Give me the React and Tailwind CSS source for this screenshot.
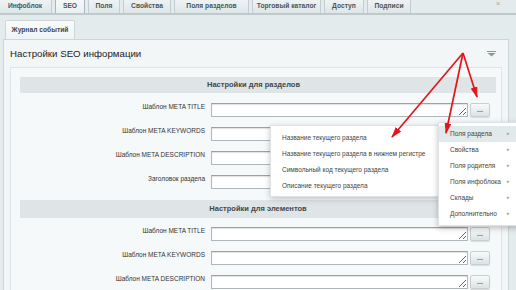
import React from "react";

const tabs = [
  { name: "Инфоблок", w: "w-[54px]" },
  { name: "SEO", w: "w-[30px]", active: true },
  { name: "Поля", w: "w-[32px]" },
  { name: "Свойства", w: "w-[48px]" },
  { name: "Поля разделов", w: "w-[75px]" },
  { name: "Торговый каталог", w: "w-[69px]" },
  { name: "Доступ", w: "w-[40px]" },
  { name: "Подписи", w: "w-[44px]" },
];

const sectionRows = [
  "Шаблон META TITLE",
  "Шаблон META KEYWORDS",
  "Шаблон META DESCRIPTION",
  "Заголовок раздела",
];

const elementRows = [
  "Шаблон META TITLE",
  "Шаблон META KEYWORDS",
  "Шаблон META DESCRIPTION",
];

const leftMenu = [
  "Название текущего раздела",
  "Название текущего раздела в нижнем регистре",
  "Символьный код текущего раздела",
  "Описание текущего раздела",
];

const rightMenu = [
  "Поля раздела",
  "Свойства",
  "Поля родителя",
  "Поля инфоблока",
  "Склады",
  "Дополнительно",
];

function Row({ label, hideBtn }) {
  return (
    <div className="flex items-start h-[14px]">
      <div className="w-[185px] text-right text-[6.5px] leading-[8px] text-[#333]">
        {label}
      </div>
      <textarea
        readOnly
        className="ml-[6px] w-[257px] h-[14px] p-0 bg-white border border-[#aeb8bc] border-t-[#98a3a7] shadow-[inset_0_1px_1px_rgba(0,0,0,0.12)] outline-none text-[6px] overflow-hidden"
      />
      <button className="ml-[2px] w-[20px] h-[14px] rounded-[2px] border border-[#c6cfd2] bg-gradient-to-b from-[#f8fafa] to-[#dce3e5] text-[7px] font-bold leading-[8px] text-[#5a6266] shadow-[0_1px_1px_rgba(0,0,0,0.12)]">
        {hideBtn ? "" : "..."}
      </button>
    </div>
  );
}

export default function App() {
  return (
    <div className="relative w-[516px] h-[290px] overflow-hidden bg-[#e4ebed] font-['Liberation_Sans',Arial,sans-serif]">
      {/* top tabs */}
      <div className="relative flex gap-[3px] h-[13px] -ml-[2px]">
        {tabs.map((t) => (
          <div
            key={t.name}
            className={`${t.w} h-[13px] flex items-center justify-center border-x text-[6.7px] font-bold text-[#4b5558] ${
              t.active
                ? "bg-gradient-to-b from-[#f6f8f8] to-[#eaf0f1] border-[#aab5b9]"
                : "bg-gradient-to-b from-[#eef2f3] to-[#dfe6e8] border-[#c3ccd0]"
            }`}
          >
            {t.name}
          </div>
        ))}
        <div className="absolute left-[498px] top-0 text-[7px] leading-[8px] text-[#9aa5a9]">
          ×
        </div>
      </div>
      <div className="h-[2px] bg-[#bfc9cc]" />

      {/* sub tab */}
      <div className="pl-[5px] pt-[5px]">
        <div className="w-[70px] h-[19px] flex items-center justify-center rounded-t-[2px] border border-b-0 border-[#cdd5d8] bg-gradient-to-b from-[#fafcfc] to-[#eef3f4] text-[6.7px] font-bold text-[#3f484b]">
          Журнал событий
        </div>
      </div>

      {/* main panel */}
      <div className="ml-[3px] w-[506px] h-[260px] bg-[#f2f6f6] border border-[#cdd5d8]">
        <div className="flex items-center justify-between h-[27px] pl-[6px] pr-[12px] pt-[1px]">
          <div className="text-[9.7px] text-[#222]">Настройки SEO информации</div>
          <svg width="9" height="6" viewBox="0 0 9 6">
            <rect x="0" y="0" width="9" height="1" fill="#8a979b" />
            <path d="M0.5 2 L8.5 2 L4.5 5.5 Z" fill="#8a979b" />
          </svg>
        </div>
        <div className="ml-[6px] w-[492px] h-[240px] bg-[#f6f9fa] border border-[#dfe6e8] pt-[9px] pl-[9px] pr-[5px]">
          <div className="h-[16px] bg-[#dfe5e7] flex items-center justify-center text-[7.5px] font-bold text-[#3e474a] pr-[9px]">
            Настройки для разделов
          </div>
          <div className="flex flex-col gap-[10px] mt-[10px]">
            {sectionRows.map((r, i) => (
              <Row key={r} label={r} hideBtn={i === 1 || i === 3} />
            ))}
          </div>
          <div className="mt-[11px] h-[18px] bg-[#dfe5e7] flex items-center justify-center text-[7.5px] font-bold text-[#3e474a]">
            Настройки для элементов
          </div>
          <div className="flex flex-col gap-[10px] mt-[9px]">
            {elementRows.map((r) => (
              <Row key={r} label={r} />
            ))}
          </div>
        </div>
      </div>

      {/* popup menus */}
      <div className="absolute left-[270px] top-[125px] w-[170px] h-[72px] bg-white border border-[#dde3e5] shadow-[0_2px_6px_rgba(0,0,0,0.22)] pt-[4px]">
        {leftMenu.map((m) => (
          <div key={m} className="h-[16px] flex items-center pl-[11px] text-[6.5px] text-[#444]">
            {m}
          </div>
        ))}
      </div>
      <div className="absolute left-[438px] top-[122px] w-[82px] h-[104px] bg-white border border-[#dde3e5] shadow-[0_2px_6px_rgba(0,0,0,0.25)] pt-[3px]">
        {rightMenu.map((m, i) => (
          <div
            key={m}
            className={`h-[16px] flex items-center justify-between pl-[11px] pr-[9px] text-[6.5px] text-[#444] ${
              i === 0 ? "bg-[#e2e9eb]" : ""
            }`}
          >
            <span>{m}</span>
            <span className="text-[5px] text-[#999]">▸</span>
          </div>
        ))}
      </div>

      {/* red arrows */}
      <svg className="absolute inset-0 pointer-events-none" width="516" height="290">
        <defs>
          <marker id="ah" markerWidth="11" markerHeight="7" refX="10" refY="3.5" orient="auto" markerUnits="userSpaceOnUse">
            <path d="M0 0 L11 3.5 L0 7 Z" fill="#e3161b" />
          </marker>
        </defs>
        <line x1="463" y1="53" x2="392" y2="137" stroke="#e3161b" strokeWidth="1.7" markerEnd="url(#ah)" />
        <line x1="463" y1="53" x2="446" y2="133" stroke="#e3161b" strokeWidth="1.7" markerEnd="url(#ah)" />
        <line x1="463" y1="53" x2="477" y2="97" stroke="#e3161b" strokeWidth="1.7" markerEnd="url(#ah)" />
      </svg>
    </div>
  );
}
